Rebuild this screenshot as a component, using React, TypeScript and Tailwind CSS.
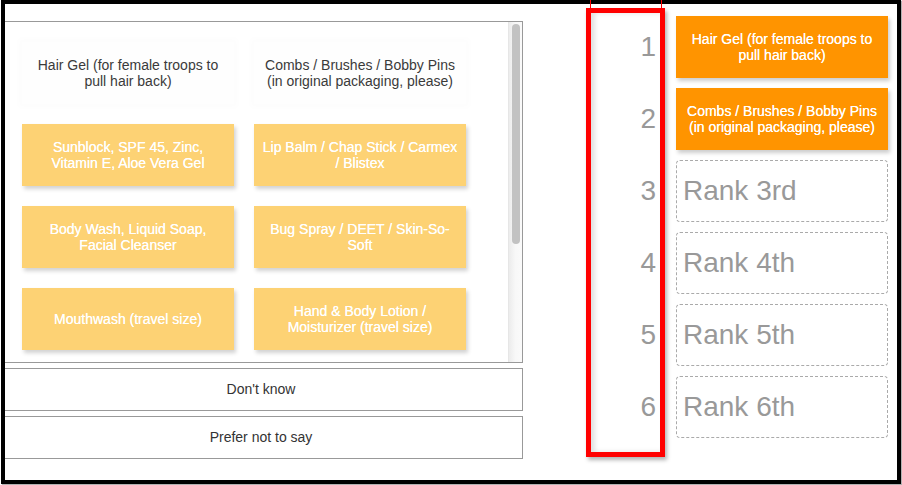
import React from "react";

const FONT = "font-['Liberation_Sans',Arial,sans-serif]";

const gridItems: { lines: string[]; ghost?: boolean }[] = [
  { lines: ["Hair Gel (for female troops to", "pull hair back)"], ghost: true },
  { lines: ["Combs / Brushes / Bobby Pins", "(in original packaging, please)"], ghost: true },
  { lines: ["Sunblock, SPF 45, Zinc,", "Vitamin E, Aloe Vera Gel"] },
  { lines: ["Lip Balm / Chap Stick / Carmex", "/ Blistex"] },
  { lines: ["Body Wash, Liquid Soap,", "Facial Cleanser"] },
  { lines: ["Bug Spray / DEET / Skin-So-", "Soft"] },
  { lines: ["Mouthwash (travel size)"] },
  { lines: ["Hand & Body Lotion /", "Moisturizer (travel size)"] },
];

const ranked = [
  ["Hair Gel (for female troops to", "pull hair back)"],
  ["Combs / Brushes / Bobby Pins", "(in original packaging, please)"],
];

const empty = ["Rank 3rd", "Rank 4th", "Rank 5th", "Rank 6th"];

function Lines({ lines }: { lines: string[] }) {
  return (
    <>
      {lines.map((l, i) => (
        <span key={i} className="block whitespace-nowrap">
          {l}
        </span>
      ))}
    </>
  );
}

export default function App() {
  return (
    <div className={`relative w-[902px] h-[485px] bg-white ${FONT}`}>
      <div className="ml-px w-[900px] h-[484px] border-4 border-black bg-white overflow-hidden flex shadow-[1px_1px_1px_rgba(0,0,0,0.3)]">
        {/* left: options panel */}
        <div className="w-[524px] ml-[-6px] shrink-0 flex flex-col">
          <div className="mt-[17px] h-[342px] border border-[#999] flex overflow-hidden">
            <div className="flex-1 overflow-hidden pl-[22px] pt-[20px]">
              <div className="grid grid-cols-[212px_212px] auto-rows-[62px] gap-x-5 gap-y-5">
                {gridItems.map((it, i) =>
                  it.ghost ? (
                    <div
                      key={i}
                      className="flex items-center justify-center text-center text-[14px] leading-4 text-[#3a3a3a] bg-[#fefefe] shadow-[0_0_6px_4px_rgba(0,0,0,0.01)]"
                    >
                      <div>
                        <Lines lines={it.lines} />
                      </div>
                    </div>
                  ) : (
                    <div
                      key={i}
                      className="flex items-center justify-center text-center text-[14px] leading-4 text-white bg-[#fdd274] shadow-[2px_3px_4px_rgba(0,0,0,0.18)] [text-shadow:0_0_0.4px_#fff]"
                    >
                      <div>
                        <Lines lines={it.lines} />
                      </div>
                    </div>
                  )
                )}
              </div>
            </div>
            <div className="w-[14px] shrink-0 bg-gradient-to-r from-[#ececec] via-[#f8f8f8] to-[#fafafa] border-l border-[#e6e6e6] pt-[2px] pl-[3px]">
              <div className="w-[8px] h-[220px] rounded-full bg-[#c2c2c2]" />
            </div>
          </div>
          <div className="mt-[5px] flex flex-col gap-[5px]">
            {["Don't know", "Prefer not to say"].map((t) => (
              <div
                key={t}
                className="h-[43px] border border-[#999] flex items-center justify-center text-[14px] text-[#333]"
              >
                {t}
              </div>
            ))}
          </div>
        </div>

        {/* rank numbers inside red annotation */}
        <div className="ml-[63px] mt-[4px] w-[79px] h-[449px] shrink-0 border-[5px] border-[#ff0000] shadow-[2px_3px_4px_rgba(0,0,0,0.3),inset_4px_0_5px_rgba(0,0,0,0.12)] pt-[3px] pr-[4px] flex flex-col gap-[10px]">
          {[1, 2, 3, 4, 5, 6].map((n) => (
            <div key={n} className="h-[62px] flex items-center justify-end text-[28px] leading-none text-[#999]">
              {n}
            </div>
          ))}
        </div>

        {/* ranked slots */}
        <div className="ml-[11px] mt-[12px] flex flex-col gap-[10px] shrink-0">
          {ranked.map((lines, i) => (
            <div
              key={i}
              className="w-[212px] h-[62px] bg-[#ff9400] flex items-center justify-center text-center text-[14px] leading-4 text-white shadow-[2px_3px_4px_rgba(0,0,0,0.2)] [text-shadow:0_0_0.4px_#fff]"
            >
              <div>
                <Lines lines={lines} />
              </div>
            </div>
          ))}
          {empty.map((t) => (
            <div
              key={t}
              className="w-[212px] h-[62px] border border-dashed border-[#aaa] rounded-[4px] flex items-center pl-[6px] text-[28px] text-[#999]"
            >
              {t}
            </div>
          ))}
        </div>
      </div>

      {/* annotation leader lines above red box */}
      <div className="absolute left-[590px] top-0 w-px h-[8px] bg-[#ff0000]" />
      <div className="absolute left-[661px] top-0 w-px h-[8px] bg-[#ff0000]" />
    </div>
  );
}
